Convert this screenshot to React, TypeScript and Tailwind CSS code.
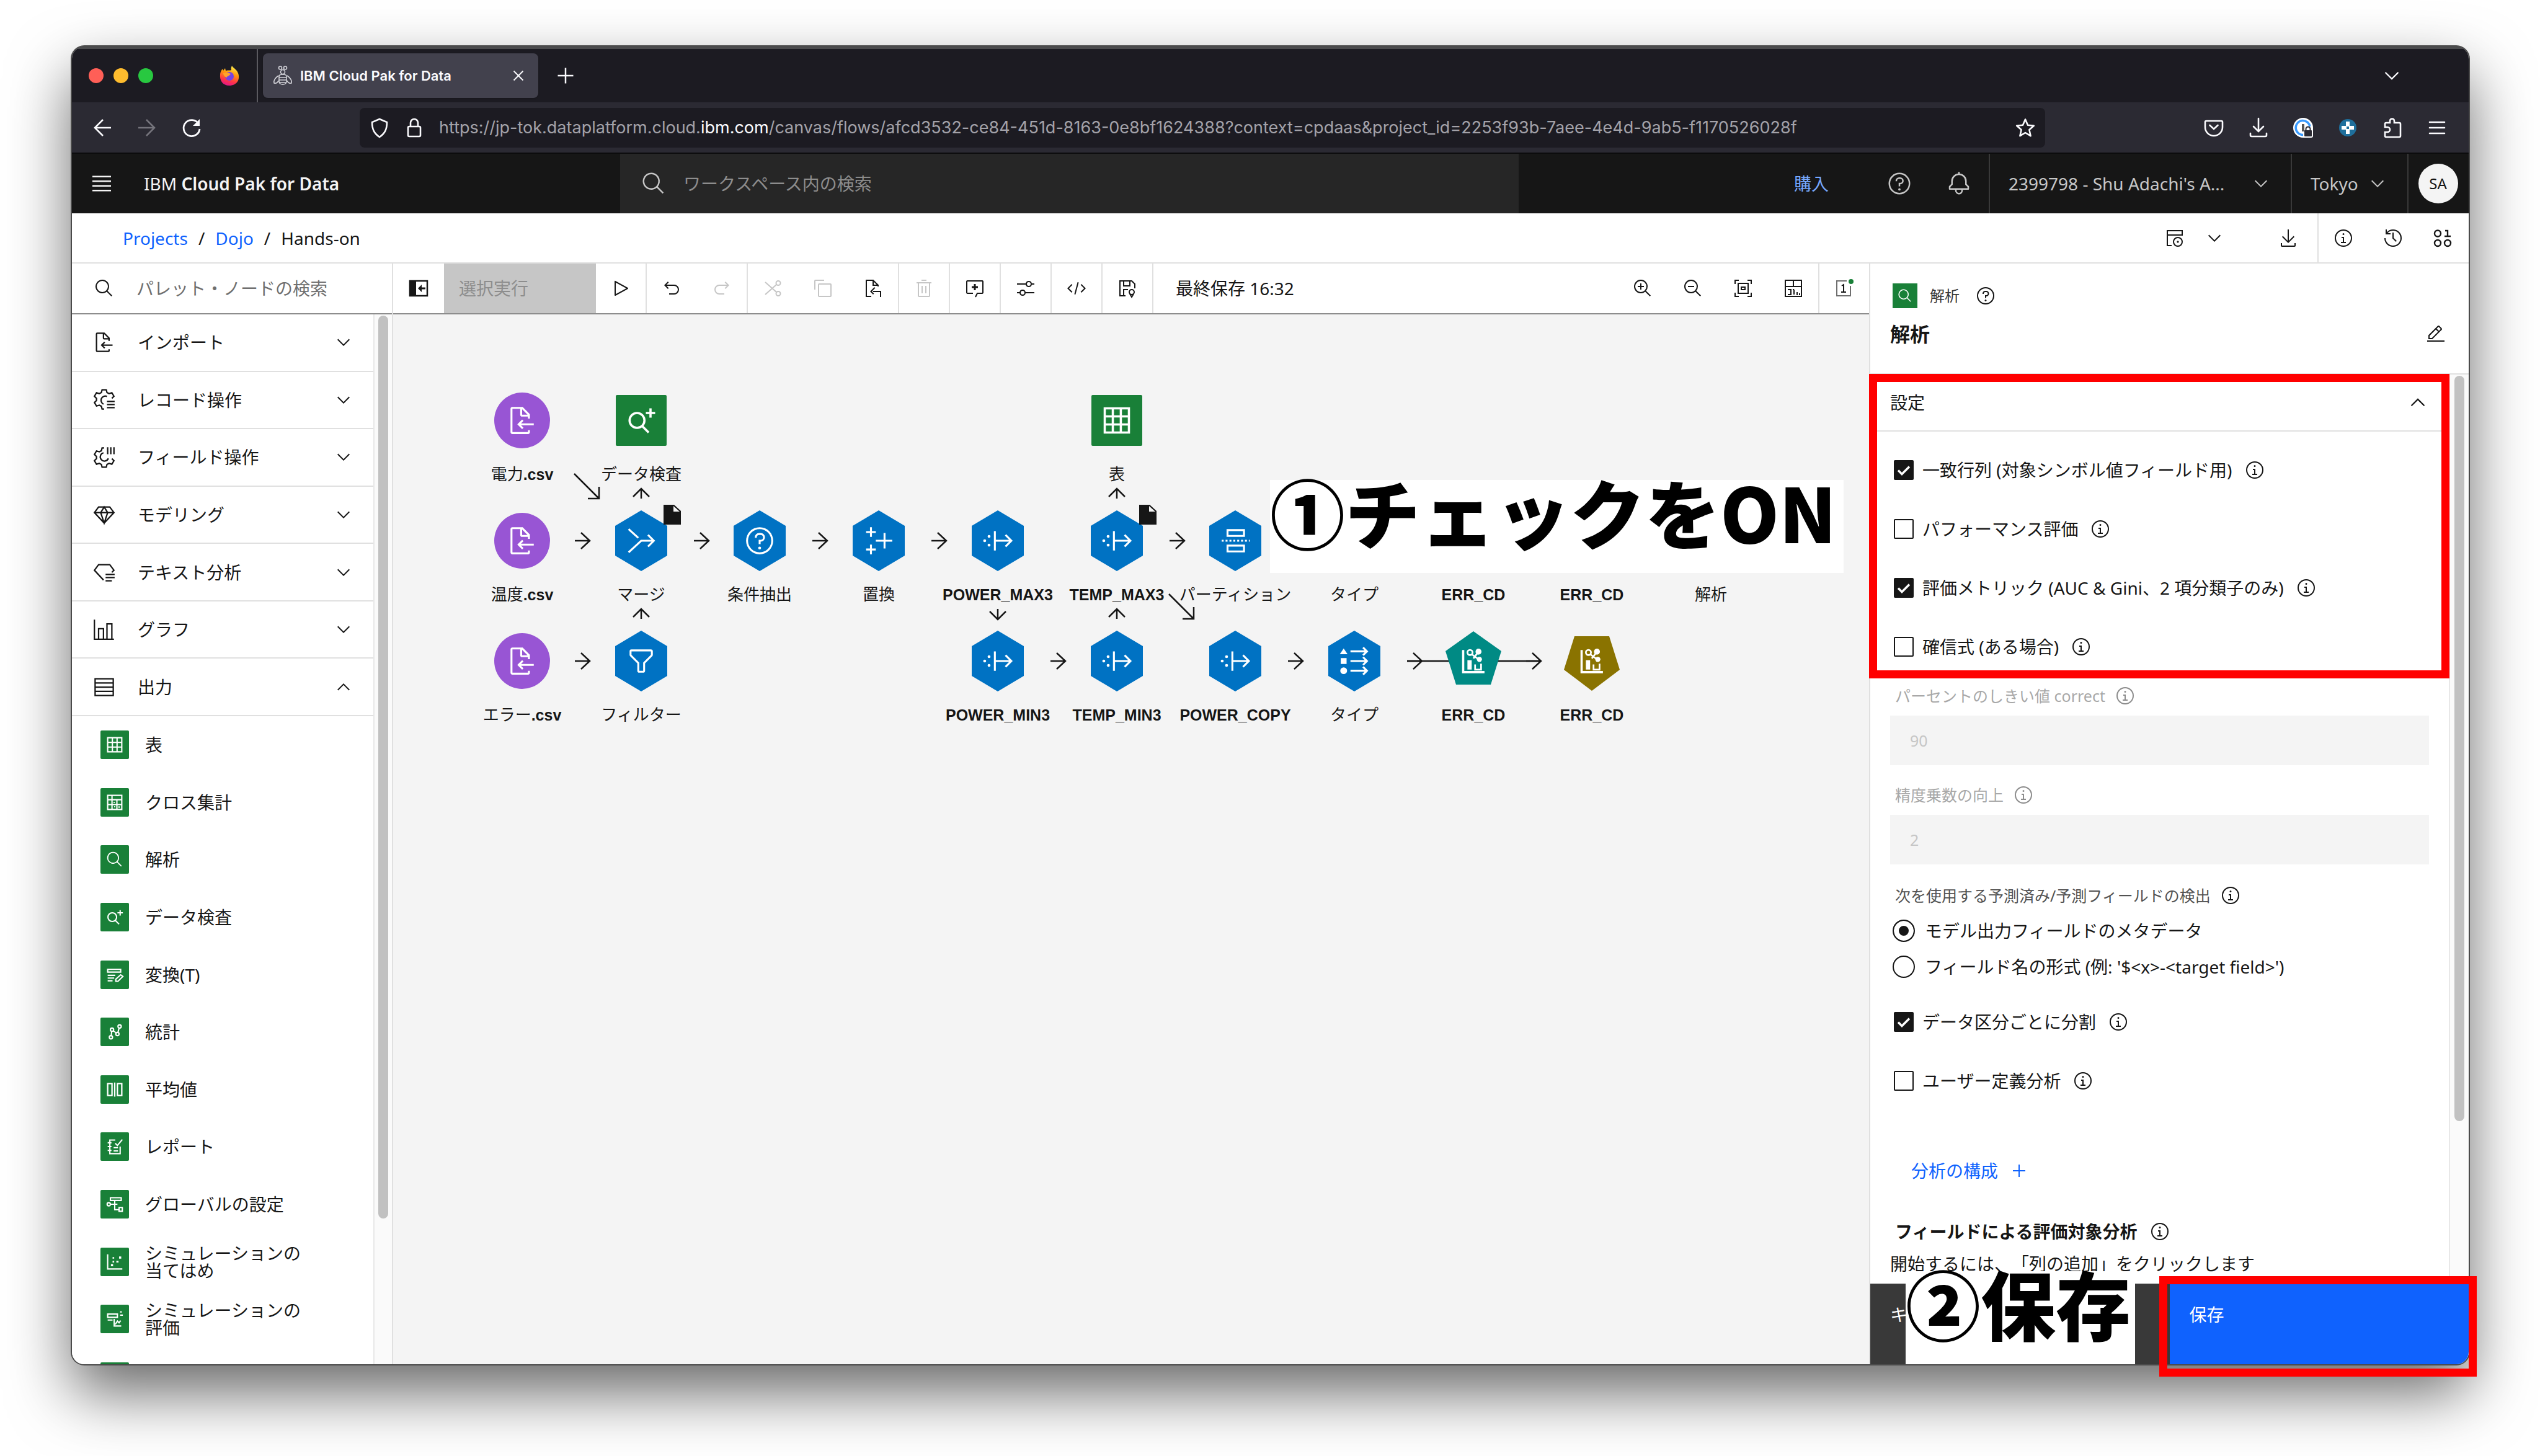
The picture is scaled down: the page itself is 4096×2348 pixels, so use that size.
import React from "react";

type GlyphName = keyof typeof glyphs;

const line = { fill: "none", stroke: "currentColor", strokeWidth: 2 } as const;

const glyphs = {
  search: (
    <path d="m29 27.586-7.552-7.552a11.018 11.018 0 1 0-1.414 1.414L27.586 29ZM4 13a9 9 0 1 1 9 9A9.01 9.01 0 0 1 4 13Z" />
  ),
  searchPlus: (
    <g {...line} strokeWidth={2.4}>
      <circle cx="11.5" cy="16" r="8" />
      <path d="M17 22l7 7M26 3v10M21 8h10" />
    </g>
  ),
  chevronDown: <path d="M16 22 6 12l1.4-1.4 8.6 8.6 8.6-8.6L26 12z" />,
  chevronUp: <path d="m16 10 10 10-1.4 1.4-8.6-8.6-8.6 8.6L6 20z" />,
  help: (
    <>
      <path d="M16 2a14 14 0 1 0 14 14A14 14 0 0 0 16 2Zm0 26a12 12 0 1 1 12-12 12 12 0 0 1-12 12Z" />
      <circle cx="16" cy="23.5" r="1.5" />
      <path d="M17 8h-1.5a4.49 4.49 0 0 0-4.5 4.5v.5h2v-.5a2.5 2.5 0 0 1 2.5-2.5H17a2.5 2.5 0 0 1 0 5h-2v4.5h2V17a4.5 4.5 0 0 0 0-9Z" />
    </>
  ),
  info: (
    <>
      <path d="M17 22v-8h-4v2h2v6h-3v2h8v-2zM16 8a1.5 1.5 0 1 0 1.5 1.5A1.5 1.5 0 0 0 16 8Z" />
      <path d="M16 30a14 14 0 1 1 14-14 14 14 0 0 1-14 14Zm0-26a12 12 0 1 0 12 12A12 12 0 0 0 16 4Z" />
    </>
  ),
  bell: (
    <path d="M28.707 19.293 26 16.586V13a10.014 10.014 0 0 0-9-9.95V1h-2v2.05A10.014 10.014 0 0 0 6 13v3.586l-2.707 2.707A1 1 0 0 0 3 20v3a1 1 0 0 0 1 1h7v.777a5.152 5.152 0 0 0 4.5 5.199A5.006 5.006 0 0 0 21 25v-1h7a1 1 0 0 0 1-1v-3a1 1 0 0 0-.293-.707ZM19 25a3 3 0 0 1-6 0v-1h6Zm8-3H5v-1.586l2.707-2.707A1 1 0 0 0 8 17v-4a8 8 0 0 1 16 0v4a1 1 0 0 0 .293.707L27 20.414Z" />
  ),
  download: (
    <path d="M26 24v4H6v-4H4v4a2 2 0 0 0 2 2h20a2 2 0 0 0 2-2v-4zM26 14l-1.41-1.41L17 20.17V2h-2v18.17l-7.59-7.58L6 14l10 10 10-10z" />
  ),
  menu4: <path d="M4 6h24v2H4zM4 12h24v2H4zM4 18h24v2H4zM4 24h24v2H4z" />,
  play: (
    <path d="M7 28a1 1 0 0 1-1-1V5a1 1 0 0 1 1.482-.876l20 11a1 1 0 0 1 0 1.752l-20 11A1 1 0 0 1 7 28ZM8 6.69v18.619L24.925 16Z" />
  ),
  undo: (
    <path d="M20 10H7.815l3.587-3.586L10 5l-6 6 6 6 1.402-1.415L7.818 12H20a6 6 0 0 1 0 12h-8v2h8a8 8 0 0 0 0-16Z" />
  ),
  redo: (
    <path d="M12 10h12.185l-3.587-3.586L22 5l6 6-6 6-1.402-1.415L24.182 12H12a6 6 0 0 0 0 12h8v2h-8a8 8 0 0 1 0-16Z" />
  ),
  cut: (
    <g {...line}>
      <circle cx="25" cy="7.5" r="3.5" />
      <circle cx="25" cy="24.5" r="3.5" />
      <path d="M4 6l18 16M4 26 22 10" />
    </g>
  ),
  copy: (
    <>
      <path d="M28 10v18H10V10h18m0-2H10a2 2 0 0 0-2 2v18a2 2 0 0 0 2 2h18a2 2 0 0 0 2-2V10a2 2 0 0 0-2-2Z" />
      <path d="M4 18H2V4a2 2 0 0 1 2-2h14v2H4Z" />
    </>
  ),
  paste: (
    <>
      <g {...line}>
        <path d="M13 29H5V3h11l8 8v2M16 3v8h8" />
        <path d="M28 30v-9H16" />
      </g>
      <path d="M19.4 15.4 18 14l-7 7 5 5 1.4-1.4L14 21z" />
    </>
  ),
  trash: (
    <path d="M12 12h2v12h-2zM18 12h2v12h-2zM4 6v2h2v20a2 2 0 0 0 2 2h16a2 2 0 0 0 2-2V8h2V6zm4 22V8h16v20zM12 2h8v2h-8z" />
  ),
  comment: (
    <g {...line}>
      <path d="M13 24H4a1.500 1.500 0 0 1-1-1V5a1.500 1.500 0 0 1 1-1h24a1.500 1.500 0 0 1 1 1v18a1.500 1.500 0 0 1-1 1h-8l-3 6" />
      <path d="M16 9v10M11 14h10" strokeWidth={3} />
    </g>
  ),
  adjust: (
    <path d="M30 8h-4.100a5 5 0 0 0-9.800 0H2v2h14.100a5 5 0 0 0 9.800 0H30zm-9 4a3 3 0 1 1 3-3 3 3 0 0 1-3 3zM2 24h4.100a5 5 0 0 0 9.800 0H30v-2H15.900a5 5 0 0 0-9.800 0H2zm9-4a3 3 0 1 1-3 3 3 3 0 0 1 3-3z" />
  ),
  code: (
    <path d="m31 16-7 7-1.410-1.410L28.170 16l-5.580-5.590L24 9l7 7zM1 16l7-7 1.410 1.410L3.830 16l5.580 5.590L8 23l-7-7zM12.420 25.484 17.640 6l1.932.518L14.350 26z" />
  ),
  save: (
    <g {...line}>
      <path d="M13 28H4V4h19l5 5v7M10 4v8h10V4M10 28V18h7" />
      <circle cx="23" cy="22" r="4" />
      <path d="M20 25l3 5 3-5" />
    </g>
  ),
  zoomIn: (
    <>
      <path d="M18 12h-4V8h-2v4H8v2h4v4h2v-4h4Z" />
      <path d="M21.448 20A10.856 10.856 0 0 0 24 13a11 11 0 1 0-11 11 10.856 10.856 0 0 0 7-2.552L27.586 29 29 27.586ZM13 22a9 9 0 1 1 9-9 9.010 9.010 0 0 1-9 9Z" />
    </>
  ),
  zoomOut: (
    <>
      <path d="M8 12h10v2H8z" />
      <path d="M21.448 20A10.856 10.856 0 0 0 24 13a11 11 0 1 0-11 11 10.856 10.856 0 0 0 7-2.552L27.586 29 29 27.586ZM13 22a9 9 0 1 1 9-9 9.010 9.010 0 0 1-9 9Z" />
    </>
  ),
  fit: (
    <g {...line}>
      <path d="M3 9V3h6M23 3h6v6M29 23v6h-6M9 29H3v-6" />
      <path d="M8 8h16v16H8zM13 14h6v4h-6z" />
    </g>
  ),
  canvasInfo: (
    <g {...line}>
      <path d="M3 3h26v26H3zM3 13h26M16 3v10" />
      <path d="M7 18h5v8H7M17 18h-2M17 18v8M22 22v5M26 24v3" />
    </g>
  ),
  notification: (
    <>
      <g {...line}>
        <path d="M20 4H4v24h22V12" stroke="#6f6f6f" />
        <path d="M12 12l3-2v12M11 22h8" />
      </g>
      <circle cx="27" cy="5" r="4" fill="#198038" />
    </>
  ),
  calendarView: (
    <g {...line}>
      <path d="M11 28H4V4h24v7H4" />
      <circle cx="21" cy="22" r="7" />
      <path d="M21 20.500v3M19.500 22h3" />
    </g>
  ),
  history: (
    <path d="M20.590 22 15 16.410V7h2v8.580l5 5.010L20.590 22zM16 2A13.940 13.940 0 0 0 6 6.230V2H4v8h8V8H7.080A12 12 0 1 1 4 16H2A14 14 0 1 0 16 2Z" />
  ),
  dataClass: (
    <g {...line} strokeWidth={2.400}>
      <circle cx="8" cy="8.500" r="5" />
      <circle cx="8" cy="24" r="5" />
      <circle cx="24" cy="24" r="5" />
      <path d="M20 4h4v9M19 13h10" />
    </g>
  ),
  edit: (
    <path d="M2 26h28v2H2zM25.400 9c.8-.8.8-2 0-2.800l-3.600-3.600c-.8-.8-2-.8-2.800 0l-15 15V24h6.400l15-15zm-5-5L24 7.600l-3 3L17.400 7l3-3zM6 22v-3.600l10-10 3.600 3.600-10 10H6z" />
  ),
  fileImport: (
    <path d="M28 19H14.830l2.580-2.590L16 15l-5 5 5 5 1.410-1.410L14.830 21H28v-2zM24 14v-4a1 1 0 0 0-.290-.710l-7-7A1 1 0 0 0 16 2H6a2 2 0 0 0-2 2v24a2 2 0 0 0 2 2h16a2 2 0 0 0 2-2v-2h-2v2H6V4h8v6a2 2 0 0 0 2 2h6v2Zm-8-4V4.410L21.590 10Z" />
  ),
  recordOps: (
    <g {...line}>
      <path d="M16 29h-3l-1-4-3-1.500-4 1.200-3-5 3-3v-3l-3-3 3-5 4 1.200 3-1.500 1-4h6l1 4 3 1.500 4-1.200 3 5-3 3" />
      <path d="M20 11a6 6 0 1 0-5 11" />
      <path d="M20 18h11M20 22.500h11M20 27h11" />
    </g>
  ),
  fieldOps: (
    <g {...line}>
      <path d="M16 3h-3l-1 4-3 1.500-4-1.200-3 5 3 3v3l-3 3 3 5 4-1.200 3 1.500 1 4h6l1-4 3-1.500 4 1.200 3-5-3-3" />
      <path d="M15 10a6 6 0 1 0 7 8" />
      <path d="M21 2v10M25.500 2v10M30 2v10" />
    </g>
  ),
  model: (
    <g {...line}>
      <path d="M8 5h16l6 8-14 15L2 13zM2 13h28M16 5l-5 8 5 15 5-15z" />
    </g>
  ),
  textAnalytics: (
    <g {...line}>
      <path d="M15 27 2 13l6-8h16l6 8-3 3" />
      <path d="M18 19h13M18 23.500h13M18 28h9" />
    </g>
  ),
  graph: (
    <g {...line}>
      <path d="M2 2v28h28M8 29V15h7v14M20 29V8h7v21" />
    </g>
  ),
  output: (
    <g {...line}>
      <path d="M3 4h26v24H3zM3 10h26M3 16h26M3 22h26" />
    </g>
  ),
  table: (
    <g {...line} strokeWidth={2.400}>
      <path d="M3 3h26v26H3zM3 11.700h26M3 20.300h26M11.700 3v26M20.300 3v26" />
    </g>
  ),
  crosstab: (
    <g {...line} strokeWidth={2.400}>
      <path d="M3 3h26v26H3zM3 11h26M11 3v26M3 20h26M20 11v18M15 15v2M24 23v3M15 24h2" />
    </g>
  ),
  transform: (
    <g {...line} strokeWidth={2.400}>
      <path d="M3 6h24v5H3zM3 17h14M3 22h12M3 27h9" />
      <path d="M18 28v-4l9-8 4 3-9 9z" />
    </g>
  ),
  statistics: (
    <g {...line} strokeWidth={2.400}>
      <circle cx="9" cy="26" r="3" />
      <circle cx="11" cy="12" r="3" />
      <circle cx="21" cy="20" r="3" />
      <circle cx="25" cy="6" r="3" />
      <path d="M9.500 23l1-8M13 14l6 4M22 17l2-8" />
    </g>
  ),
  means: (
    <g {...line} strokeWidth={2.600}>
      <path d="M3 5h8v22H3zM21 5h8v22h-8zM16 3v26" />
    </g>
  ),
  report: (
    <g {...line} strokeWidth={2.400}>
      <path d="M26 16v13H7V4h10M3 9h7M3 16h7M3 23h7M14 18h8M14 24h8M17 10l4 4 9-11" />
    </g>
  ),
  globals: (
    <g {...line} strokeWidth={2.400}>
      <path d="M8 4h20v5H8zM9 16h12M16 9v17h8M24 22h6v7h-6z" />
      <circle cx="5" cy="16" r="3" />
    </g>
  ),
  scatter: (
    <>
      <path d="M3 2v27h27" {...line} strokeWidth={2.400} />
      <path d="M9 20h4v4H9zM12 7h3v3h-3zM12 14h3v3h-3zM19 14h4v3h-4zM24 6h4v4h-4z" />
    </>
  ),
  simEval: (
    <g {...line} strokeWidth={2.400}>
      <path d="M3 7h18v6H3zM3 18h9M15 16v13h13M17 26l4-6 3 3 3-4M26 3h3M26 9h5" />
    </g>
  ),
  filter: (
    <path d="M18 28h-4a2 2 0 0 1-2-2v-7.590L4.590 11A2 2 0 0 1 4 9.590V6a2 2 0 0 1 2-2h20a2 2 0 0 1 2 2v3.590a2 2 0 0 1-.590 1.410L20 18.410V26a2 2 0 0 1-2 2ZM6 6v3.590l8 8V26h4v-8.410l8-8V6Z" />
  ),
  merge: <path d="M3 4l10 9M3 28l13-12h13M23 10l6 6-6 6" {...line} />,
  fill: <path d="M8 2v10M3 7h10M8 20v10M3 25h10M22 8v16M13 16h17" {...line} />,
  derive: (
    <>
      <path d="M13 6v20M13 16h17M24 10l6 6-6 6" {...line} />
      <circle cx="2.500" cy="16" r="1.500" />
      <circle cx="7" cy="11.500" r="1.500" />
      <circle cx="7" cy="20.500" r="1.500" />
    </>
  ),
  partition: (
    <g {...line}>
      <path d="M8 5h17v6H8zM8 21h17v6H8z" />
      <path d="M2 16h29" strokeDasharray="2 2" />
    </g>
  ),
  typeNode: (
    <>
      <path d="M5 3l4 6H1zM2 13h6v6H2z" />
      <circle cx="5" cy="26" r="3.500" />
      <path d="M12 6h16M25 2l4 4-4 4M12 16h16M25 12l4 4-4 4M12 26h16M25 22l4 4-4 4" {...line} />
    </>
  ),
  modelNugget: (
    <>
      <path d="M4 3v26h25" {...line} strokeWidth={2.600} />
      <path d="M9 15h5v11H9z" />
      <path d="M18 20v6h7v-7" {...line} />
      <circle cx="12" cy="6" r="3" {...line} />
      <circle cx="22" cy="5" r="3.500" />
      <circle cx="23" cy="14" r="3" />
      <path d="M14 8l8 6M22 5l-6 8" {...line} />
    </>
  ),
  add: <path d="M17 15V6h-2v9H6v2h9v9h2v-9h9v-2z" />,
  back: <path d="M17 3 4 16l13 13M4 16h26" {...line} strokeWidth={2.600} />,
  forward: <path d="M15 3l13 13-13 13M28 16H2" {...line} strokeWidth={2.600} />,
  reload: (
    <>
      <path d="M27 9.500A13 13 0 1 0 29 18" {...line} strokeWidth={2.800} />
      <path d="M29 2v11H18z" />
    </>
  ),
  shield: <path d="M16 2 4 7c0 11 3 18 12 24 9-6 12-13 12-24z" {...line} strokeWidth={2.600} />,
  lock: (
    <g {...line} strokeWidth={2.600}>
      <rect x="6" y="14" width="20" height="16" rx="2" />
      <path d="M10 14V8a6 6 0 0 1 12 0v6" />
    </g>
  ),
  star: (
    <path
      d="M16 2.500l4 9.200 9.800 1-7.400 6.600 2.200 9.900L16 24l-8.600 5.200 2.200-9.900-7.400-6.600 9.800-1z"
      {...line}
      strokeWidth={2.600}
      strokeLinejoin="round"
    />
  ),
  pocket: (
    <g {...line} strokeWidth={2.600} strokeLinecap="round">
      <path d="M4 5h24a2 2 0 0 1 2 2v8a14 14 0 0 1-28 0V7a2 2 0 0 1 2-2z" />
      <path d="M9.500 12l6.500 6 6.500-6" />
    </g>
  ),
  tray: (
    <g {...line} strokeWidth={2.600} strokeLinecap="round">
      <path d="M16 1v20M8 14l8 8 8-8M3 25v3a2 2 0 0 0 2 2h22a2 2 0 0 0 2-2v-3" />
    </g>
  ),
  keyVault: (
    <>
      <path d="M16 0a16 16 0 0 0 0 32h13a3 3 0 0 0 3-3V16A16 16 0 0 0 16 0z" fill="#fff" />
      <path d="M27 14a11.500 11.500 0 1 0-11 13.500" fill="none" stroke="#3a9bff" strokeWidth="3.500" />
      <path d="M14 10h4v12h-4z" fill="#555" />
      <rect x="18" y="20" width="12" height="10" rx="1" fill="#2b2a33" />
      <path d="M20.500 20v-2a3.500 3.500 0 0 1 7 0v2" fill="none" stroke="#2b2a33" strokeWidth="2" />
    </>
  ),
  extensionBlue: (
    <>
      <circle cx="16" cy="16" r="14" fill="#1f6f9c" />
      <path d="M13 6h6v7h7v6h-7v7h-6v-7H6v-6h7z" fill="#fff" />
      <path d="M14 14h4v4h-4z" fill="#1f6f9c" />
    </>
  ),
  puzzle: (
    <path
      d="M12 8V5a3.500 3.500 0 0 1 7 0v3h8a2 2 0 0 1 2 2v19a2 2 0 0 1-2 2H6a2 2 0 0 1-2-2v-6h4a4 4 0 0 0 0-8H4v-5a2 2 0 0 1 2-2z"
      {...line}
      strokeWidth={2.600}
    />
  ),
  menu3: <path d="M4 7h24M4 16h24M4 25h24" {...line} strokeWidth={2.600} strokeLinecap="round" />,
  close: <path d="M4 4l24 24M28 4 4 28" {...line} strokeWidth={3} />,
  firefox: (
    <>
      <defs>
        <linearGradient id="flame" x1="0.7" y1="0" x2="0.4" y2="1">
          <stop offset="0" stopColor="#fff44f" />
          <stop offset="0.400" stopColor="#ff980e" />
          <stop offset="0.750" stopColor="#ff3647" />
          <stop offset="1" stopColor="#e31587" />
        </linearGradient>
      </defs>
      <path
        d="M20 0c1 3 7 5 10 12 4 11-3 20-14 20S0 24 1 14c0-3 2-7 4-9l1 3 3-4 1 4c4-1 7 0 9-1-1-2 0-5 1-7z"
        fill="url(#flame)"
      />
      <circle cx="16" cy="17" r="7" fill="#7542e5" />
      <path d="M6 12c4-2 8-1 12 1-2 4-6 3-6 6-4-1-6-4-6-7z" fill="#ffa32b" />
    </>
  ),
  bee: (
    <g {...line} strokeWidth={1.600}>
      <circle cx="12" cy="3.500" r="2.500" />
      <circle cx="20" cy="3.500" r="2.500" />
      <circle cx="16" cy="10" r="3.500" />
      <path d="M10 17c0-4 12-4 12 0v8c0 7-12 7-12 0zM10 19h12M10 23h12M10 27h12M9 16c-6 4-8 8-7 12 3 1 6-1 7-4M23 16c6 4 8 8 7 12-3 1-6-1-7-4" />
    </g>
  ),
  page: <path d="M2 0h17l11 10v22H2zM18 2v9h10z" fillRule="evenodd" />,
};

function Icon({ name, className = "size-8" }: { name: GlyphName; className?: string }) {
  return (
    <svg viewBox="0 0 32 32" fill="currentColor" aria-hidden="true" className={"shrink-0 overflow-visible " + className}>
      {glyphs[name]}
    </svg>
  );
}

/* ---------- browser chrome ---------- */

function TabStrip() {
  return (
    <div className="flex h-[90px] items-center border-t-4 border-[#4b4b4d] bg-[#1c1b22] pl-[27px] text-[#fbfbfe]">
      <div className="flex gap-4">
        <button aria-label="Close window" className="size-6 rounded-full bg-[#ff5f57]" />
        <button aria-label="Minimise window" className="size-6 rounded-full bg-[#febc2e]" />
        <button aria-label="Zoom window" className="size-6 rounded-full bg-[#28c840]" />
      </div>
      <Icon name="firefox" className="ml-[107px] size-8" />
      <div className="ml-7 h-full border-r-2 border-[#5b5a60]" />
      <div className="ml-2 flex h-[72px] w-[444px] items-center rounded-lg bg-[#42414d] pr-[22px] pl-4 shadow">
        <Icon name="bee" className="size-8 text-[#d0d0d6]" />
        <span className="ml-3 font-[Inter] text-[22px] font-semibold">IBM Cloud Pak for Data</span>
        <button aria-label="Close tab" className="ml-auto">
          <Icon name="close" className="size-5" />
        </button>
      </div>
      <button aria-label="New tab" className="ml-6">
        <Icon name="add" className="size-10" />
      </button>
      <button aria-label="List all tabs" className="mr-[106px] ml-auto">
        <Icon name="chevronDown" className="size-9" />
      </button>
    </div>
  );
}

function NavBar() {
  const tools: [GlyphName, string][] = [
    ["pocket", "Save to Pocket"],
    ["tray", "Downloads"],
    ["keyVault", "Password manager"],
    ["extensionBlue", "Add-on"],
    ["puzzle", "Extensions"],
    ["menu3", "Application menu"],
  ];
  return (
    <div className="flex h-[83px] items-center border-b-2 border-[#0c0c0d] bg-[#2b2a33] pr-[35px] pl-[33px] text-[#fbfbfe]">
      <div className="flex gap-10">
        <button aria-label="Back"><Icon name="back" /></button>
        <button aria-label="Forward" className="text-[#75747c]"><Icon name="forward" /></button>
        <button aria-label="Reload"><Icon name="reload" /></button>
      </div>
      <div className="mr-[256px] ml-[255px] flex h-16 flex-1 items-center rounded-lg bg-[#1c1b22] px-4">
        <Icon name="shield" />
        <Icon name="lock" className="ml-6 size-8" />
        <div role="textbox" aria-label="Address" tabIndex={0} className="ml-6 flex-1 font-[Inter] text-[27px] whitespace-nowrap text-[#a3a2a9]">
          https://jp-tok.dataplatform.cloud.<span className="text-[#fbfbfe]">ibm.com</span>
          /canvas/flows/afcd3532-ce84-451d-8163-0e8bf1624388?context=cpdaas&amp;project_id=2253f93b-7aee-4e4d-9ab5-f1170526028f
        </div>
        <button aria-label="Bookmark this page"><Icon name="star" /></button>
      </div>
      <div className="flex gap-10">
        {tools.map(([name, label]) => (
          <button key={name} aria-label={label}><Icon name={name} /></button>
        ))}
      </div>
    </div>
  );
}

/* ---------- application header ---------- */

function AppHeader() {
  return (
    <header className="flex h-24 items-center bg-[#161616] pr-[2px] text-[#c6c6c6]">
      <div className="flex w-[884px] items-center text-[#f4f4f4]">
        <button aria-label="Menu" className="grid size-24 place-items-center">
          <Icon name="menu4" className="size-10" />
        </button>
        <span className="ml-5">IBM <b className="font-semibold">Cloud Pak for Data</b></span>
      </div>
      <label className="flex h-full w-[37.5%] items-center gap-7 bg-[#262626] pl-[34px]">
        <Icon name="search" className="size-10" />
        <input aria-label="ワークスペース内の検索" placeholder="ワークスペース内の検索" className="min-w-0 flex-1 bg-transparent outline-none placeholder:text-[#8d8d8d]" />
      </label>
      <a href="#purchase" className="mr-[66px] ml-auto text-[#78a9ff]">購入</a>
      <button aria-label="Help" className="grid size-24 place-items-center"><Icon name="help" className="size-10" /></button>
      <button aria-label="Notifications" className="grid size-24 place-items-center"><Icon name="bell" className="size-10" /></button>
      <button className="flex h-full w-[487px] items-center justify-between border-l-2 border-[#393939] pr-8 pl-[30px]">
        2399798 - Shu Adachi's A... <Icon name="chevronDown" />
      </button>
      <button className="flex h-full w-[188px] items-center justify-between border-l-2 border-[#393939] pr-8 pl-[30px]">
        Tokyo <Icon name="chevronDown" />
      </button>
      <div className="grid h-full w-[97px] place-items-center border-l-2 border-[#393939]">
        <button className="size-16 rounded-full bg-[#f4f4f4] text-[24px] text-[#161616]">SA</button>
      </div>
    </header>
  );
}

function Breadcrumbs() {
  return (
    <div className="flex h-[81px] items-center border-b-2 border-[#e0e0e0] bg-white pl-[82px]">
      <nav className="flex gap-[17px]">
        <a href="#projects" className="text-[#0f62fe]">Projects</a>
        <span>/</span>
        <a href="#dojo" className="text-[#0f62fe]">Dojo</a>
        <span>/</span>
        <span>Hands-on</span>
      </nav>
      <button aria-label="Schedule" className="ml-auto flex gap-8">
        <Icon name="calendarView" />
        <Icon name="chevronDown" />
      </button>
      <button aria-label="Download" className="grid h-full w-[150px] place-items-center pl-14"><Icon name="download" /></button>
      <div className="flex h-full border-l-2 border-[#e0e0e0] pr-[2px]">
        <button aria-label="Information" className="grid w-20 place-items-center"><Icon name="info" /></button>
        <button aria-label="History" className="grid w-20 place-items-center"><Icon name="history" /></button>
        <button aria-label="Data" className="grid w-20 place-items-center"><Icon name="dataClass" /></button>
      </div>
    </div>
  );
}

/* ---------- palette ---------- */

const categories: [GlyphName, string][] = [
  ["fileImport", "インポート"],
  ["recordOps", "レコード操作"],
  ["fieldOps", "フィールド操作"],
  ["model", "モデリング"],
  ["textAnalytics", "テキスト分析"],
  ["graph", "グラフ"],
  ["output", "出力"],
];

const outputs: [GlyphName, string[]][] = [
  ["table", ["表"]],
  ["crosstab", ["クロス集計"]],
  ["search", ["解析"]],
  ["searchPlus", ["データ検査"]],
  ["transform", ["変換(T)"]],
  ["statistics", ["統計"]],
  ["means", ["平均値"]],
  ["report", ["レポート"]],
  ["globals", ["グローバルの設定"]],
  ["scatter", ["シミュレーションの", "当てはめ"]],
  ["simEval", ["シミュレーションの", "評価"]],
  ["table", []],
];

function Palette() {
  return (
    <aside className="flex min-h-0 flex-col border-r-2 border-[#e0e0e0] bg-white">
      <label className="flex h-[82px] shrink-0 items-center gap-9 border-b-2 border-[#8d8d8d] pl-9">
        <Icon name="search" />
        <input aria-label="パレット・ノードの検索" placeholder="パレット・ノードの検索" className="min-w-0 flex-1 bg-transparent outline-none placeholder:text-[#6f6f6f]" />
      </label>
      <div className="flex min-h-0 flex-1">
        <div className="flex-1 overflow-hidden">
          <ul className="grid h-[1759px] auto-rows-fr">
            {categories.map(([icon, label]) => (
              <li key={label} className="border-b-2 border-[#e0e0e0]">
                <button aria-expanded={label === "出力"} className="flex h-full w-full items-center gap-9 pr-8 pl-[34px]">
                  <Icon name={icon} className="size-9" />
                  <span>{label}</span>
                  <Icon name={label === "出力" ? "chevronUp" : "chevronDown"} className="ml-auto size-8" />
                </button>
              </li>
            ))}
            {outputs.map(([icon, lines], i) => (
              <li key={i} className="flex items-center gap-[26px] pl-[46px]">
                <span className="grid size-[46px] place-items-center rounded-[2px] bg-[#198038] text-white">
                  <Icon name={icon} className="size-7" />
                </span>
                <span className="leading-7">
                  {lines.map((l) => (
                    <span key={l} className="block">{l}</span>
                  ))}
                </span>
              </li>
            ))}
          </ul>
        </div>
        <div className="flex w-[30px] justify-center border-l-2 border-[#e8e8e8] bg-[#fafafa]">
          <div className="mt-[2px] h-[86%] w-4 rounded-full bg-[#c1c1c1]" />
        </div>
      </div>
    </aside>
  );
}

/* ---------- toolbar ---------- */

function ToolGroup({ items }: { items: [GlyphName, string, boolean?][] }) {
  return (
    <div className="flex h-full gap-px border-r-2 border-[#e0e0e0]">
      {items.map(([name, label, off]) => (
        <button
          key={name}
          aria-label={label}
          disabled={off}
          className="grid w-20 place-items-center text-[#161616] disabled:text-[#c6c6c6]"
        >
          <Icon name={name} />
        </button>
      ))}
    </div>
  );
}

function Toolbar() {
  return (
    <div className="flex h-[82px] shrink-0 items-center border-b-2 border-[#8d8d8d] bg-white">
      <button aria-label="パレットを閉じる" className="grid h-full w-[82px] place-items-center">
        <svg viewBox="0 0 32 32" className="size-8" aria-hidden="true">
          <path d="M2 4h28v24H2z" fill="none" stroke="#161616" strokeWidth="2.500" />
          <path d="M2 4h10v24H2zM15 16l6-6v4.500h6v3h-6V22z" fill="#161616" />
        </svg>
      </button>
      <button disabled className="h-full w-[245px] bg-[#c6c6c6] pl-6 text-left text-[#8d8d8d]">選択実行</button>
      <ToolGroup items={[["play", "実行"]]} />
      <ToolGroup items={[["undo", "元に戻す"], ["redo", "やり直し", true]]} />
      <ToolGroup items={[["cut", "切り取り", true], ["copy", "コピー", true], ["paste", "貼り付け"]]} />
      <ToolGroup items={[["trash", "削除", true]]} />
      <ToolGroup items={[["comment", "コメント"]]} />
      <ToolGroup items={[["adjust", "設定"]]} />
      <ToolGroup items={[["code", "コード"]]} />
      <ToolGroup items={[["save", "保存"]]} />
      <span className="ml-9">最終保存 16:32</span>
      <div className="ml-auto flex h-full">
        <ToolGroup items={[["zoomIn", "拡大"], ["zoomOut", "縮小"], ["fit", "全体表示"], ["canvasInfo", "概要"]]} />
        <button aria-label="通知" className="grid w-20 place-items-center"><Icon name="notification" /></button>
      </div>
    </div>
  );
}

/* ---------- flow canvas ---------- */

type Shape = "circle" | "square" | "hexagon" | "pentagon" | "nugget";
type FlowNode = { col: number; row: number; shape: Shape; icon: GlyphName; jp?: string; en?: string; page?: boolean };

const nodes: FlowNode[] = [
  { col: 0, row: 0, shape: "circle", icon: "fileImport", jp: "電力", en: ".csv" },
  { col: 1, row: 0, shape: "square", icon: "searchPlus", jp: "データ検査" },
  { col: 5, row: 0, shape: "square", icon: "table", jp: "表" },
  { col: 0, row: 1, shape: "circle", icon: "fileImport", jp: "温度", en: ".csv" },
  { col: 1, row: 1, shape: "hexagon", icon: "merge", jp: "マージ", page: true },
  { col: 2, row: 1, shape: "hexagon", icon: "help", jp: "条件抽出" },
  { col: 3, row: 1, shape: "hexagon", icon: "fill", jp: "置換" },
  { col: 4, row: 1, shape: "hexagon", icon: "derive", en: "POWER_MAX3" },
  { col: 5, row: 1, shape: "hexagon", icon: "derive", en: "TEMP_MAX3", page: true },
  { col: 6, row: 1, shape: "hexagon", icon: "partition", jp: "パーティション" },
  { col: 7, row: 1, shape: "hexagon", icon: "typeNode", jp: "タイプ" },
  { col: 8, row: 1, shape: "pentagon", icon: "modelNugget", en: "ERR_CD" },
  { col: 9, row: 1, shape: "nugget", icon: "modelNugget", en: "ERR_CD" },
  { col: 10, row: 1, shape: "square", icon: "search", jp: "解析" },
  { col: 0, row: 2, shape: "circle", icon: "fileImport", jp: "エラー", en: ".csv" },
  { col: 1, row: 2, shape: "hexagon", icon: "filter", jp: "フィルター" },
  { col: 4, row: 2, shape: "hexagon", icon: "derive", en: "POWER_MIN3" },
  { col: 5, row: 2, shape: "hexagon", icon: "derive", en: "TEMP_MIN3" },
  { col: 6, row: 2, shape: "hexagon", icon: "derive", en: "POWER_COPY" },
  { col: 7, row: 2, shape: "hexagon", icon: "typeNode", jp: "タイプ" },
  { col: 8, row: 2, shape: "pentagon", icon: "modelNugget", en: "ERR_CD" },
  { col: 9, row: 2, shape: "nugget", icon: "modelNugget", en: "ERR_CD" },
];

const shapes: Record<Shape, React.ReactElement> = {
  circle: <circle cx="50" cy="50" r="45" fill="#9855d4" />,
  square: <rect x="9" y="9" width="82" height="82" rx="2" fill="#198038" />,
  hexagon: <path d="M50 1l42 25v48L50 99 8 74V26z" fill="#0072c3" />,
  pentagon: <path d="M50 2l45 32-17 54H22L5 34z" fill="#008a84" />,
  nugget: <path d="M22 10h56l17 54-45 34L5 64z" fill="#8a7300" />,
};

const colX = (c: number) => Math.round(208 + 191.7 * c);
const rowY = (r: number) => 171 + 194 * r;

function NodeView({ node }: { node: FlowNode }) {
  return (
    <div
      className="absolute flex w-[192px] flex-col items-center"
      style={{ left: colX(node.col) - 96, top: rowY(node.row) - 50 }}
    >
      <div className="relative grid size-[100px] place-items-center">
        <svg viewBox="0 0 100 100" className="col-start-1 row-start-1 size-[100px]" aria-hidden="true">
          {shapes[node.shape]}
        </svg>
        <Icon
          name={node.icon}
          className={
            node.shape === "square"
              ? "col-start-1 row-start-1 size-12 text-white"
              : node.shape === "pentagon" || node.shape === "nugget"
                ? "col-start-1 row-start-1 size-11 text-white"
                : "col-start-1 row-start-1 size-[50px] text-white"
          }
        />
        {node.page && <Icon name="page" className="absolute -top-2 -right-4 size-8 text-[#161616]" />}
      </div>
      <span className="mt-5 text-[26px] leading-[34px] whitespace-nowrap font-['Liberation_Sans','Noto_Sans_CJK_JP',sans-serif]">
        {node.jp}
        <b className="text-[25px]">{node.en}</b>
      </span>
    </div>
  );
}

const rightArrows: [number, number][] = [
  [0, 1], [1, 1], [2, 1], [3, 1], [5, 1],
  [0, 2], [4, 2], [6, 2], [7, 2], [8, 2],
];

function Canvas() {
  return (
    <div className="relative flex-1 overflow-hidden bg-[#f4f4f4]">
      <svg className="absolute inset-0 h-full w-full" fill="none" stroke="#161616" strokeWidth="2.500" aria-hidden="true">
        {rightArrows.map(([c, r]) => (
          <path key={c + "-" + r} d={`M${colX(c) + 85} ${rowY(r)}h24m-14-13l14 13-14 13`} />
        ))}
        <path d={`M${colX(7) + 85} ${rowY(2)}H${colX(8) + 109}`} />
        <path d="M400 297v-16m-13 13l13-13 13 13M400 491v-16m-13 13l13-13 13 13M1167 297v-16m-13 13l13-13 13 13M1167 491v-16m-13 13l13-13 13 13M975 475v17m-13-13l13 13 13-13" />
        <path d="M292 257l40 40m-18 0h18v-19M1251 451l40 40m-18 0h18v-19" />
      </svg>
      {nodes.map((n) => (
        <NodeView key={n.col + "-" + n.row} node={n} />
      ))}
    </div>
  );
}

/* ---------- properties panel ---------- */

function CheckRow({ id, label, checked }: { id: string; label: string; checked?: boolean }) {
  return (
    <div className="flex h-[95px] items-center pl-[38px]">
      <span className="grid size-8 place-items-center">
        <input
          id={id}
          type="checkbox"
          defaultChecked={checked}
          className="col-start-1 row-start-1 size-8 appearance-none rounded-[2px] border-2 border-[#161616] checked:bg-[#161616]"
        />
        {checked && (
          <svg viewBox="0 0 32 32" className="pointer-events-none col-start-1 row-start-1 size-8" fill="none" stroke="#fff" strokeWidth="3.500" aria-hidden="true">
            <path d="M7 16.500l6 6 12-12" />
          </svg>
        )}
      </span>
      <label htmlFor={id} className="ml-[14px]">{label}</label>
      <Icon name="info" className="ml-5 size-8" />
    </div>
  );
}

function RadioRow({ id, label, checked }: { id: string; label: string; checked?: boolean }) {
  return (
    <div className="flex h-[58px] items-center pl-9">
      <input
        id={id}
        type="radio"
        name="detect"
        defaultChecked={checked}
        className="size-9 appearance-none rounded-full border-2 border-[#161616] checked:bg-[#161616] checked:shadow-[inset_0_0_0_8px_white]"
      />
      <label htmlFor={id} className="ml-4">{label}</label>
    </div>
  );
}

function NumberField({ id, label, value }: { id: string; label: string; value: string }) {
  return (
    <div className="pr-8 pl-8">
      <div className="flex h-12 items-center gap-4 pl-2 text-[25px] text-[#a8a8a8]">
        <label htmlFor={id}>{label}</label>
        <Icon name="info" className="size-8 text-[#8d8d8d]" />
      </div>
      <input
        id={id}
        disabled
        defaultValue={value}
        className="mt-2 block h-20 w-full bg-[#f4f4f4] px-8 text-[25px] text-[#c6c6c6]"
      />
    </div>
  );
}

function PropertiesPanel() {
  return (
    <section className="flex min-h-0 flex-col border-l-2 border-[#e0e0e0] bg-white">
      <div className="flex h-[179px] shrink-0 flex-col border-b-2 border-[#e0e0e0] pt-8 pr-[37px] pl-8">
        <div className="flex items-center pl-1 text-[24px] leading-10 text-[#393939]">
          <span className="grid size-10 place-items-center bg-[#198038] text-white"><Icon name="search" className="size-6" /></span>
          <span className="ml-5">解析</span>
          <button aria-label="ヘルプ" className="ml-[26px] text-[#161616]"><Icon name="help" /></button>
        </div>
        <div className="mt-5 flex items-center justify-between">
          <h2 className="text-[32px] leading-[44px] font-bold">解析</h2>
          <button aria-label="名前の編集"><Icon name="edit" /></button>
        </div>
      </div>
      <div className="flex min-h-0 flex-1">
        <div className="flex-1 overflow-hidden">
          <button aria-expanded="true" className="flex h-[92px] w-full items-center justify-between border-b-2 border-[#e0e0e0] pr-8 pl-8">
            設定 <Icon name="chevronUp" className="size-9" />
          </button>
          <div className="mt-[14px]">
            <CheckRow id="matrix" label="一致行列 (対象シンボル値フィールド用)" checked />
            <CheckRow id="perf" label="パフォーマンス評価" />
            <CheckRow id="metric" label="評価メトリック (AUC &amp; Gini、2 項分類子のみ)" checked />
            <CheckRow id="confidence" label="確信式 (ある場合)" />
          </div>
          <div className="mt-2 flex flex-col gap-6">
            <NumberField id="threshold" label="パーセントのしきい値 correct" value="90" />
            <NumberField id="improve" label="精度乗数の向上" value="2" />
          </div>
          <fieldset className="mt-[26px]">
            <legend className="mb-1 flex h-12 items-center gap-4 pl-10 text-[25px] text-[#525252]">
              次を使用する予測済み/予測フィールドの検出
              <Icon name="info" className="size-8 text-[#161616]" />
            </legend>
            <RadioRow id="meta" label="モデル出力フィールドのメタデータ" checked />
            <RadioRow id="format" label="フィールド名の形式 (例: '$<x>-<target field>')" />
          </fieldset>
          <div className="mt-3">
            <CheckRow id="split" label="データ区分ごとに分割" checked />
            <CheckRow id="custom" label="ユーザー定義分析" />
          </div>
          <button className="mt-[58px] flex h-20 items-center gap-[18px] pl-[66px] text-[#0f62fe]">
            分析の構成 <Icon name="add" className="size-8" />
          </button>
          <h3 className="mt-[34px] flex h-12 items-center gap-5 pl-10 font-bold">
            フィールドによる評価対象分析 <Icon name="info" />
          </h3>
          <p className="mt-2 pl-8 leading-10 [text-spacing-trim:space-all]">開始するには、「列の追加」をクリックします</p>
        </div>
        <div className="flex w-8 justify-center border-l-2 border-[#e8e8e8] bg-[#fafafa]">
          <div className="mt-[2px] h-[82%] w-4 rounded-full bg-[#c1c1c1]" />
        </div>
      </div>
      <div className="grid h-[130px] shrink-0 grid-cols-2 text-white">
        <button className="flex items-start bg-[#393939] pt-[30px] pl-8 leading-10">キャンセル</button>
        <button className="flex items-start bg-[#0f62fe] pt-[30px] pl-8 leading-10">保存</button>
      </div>
    </section>
  );
}

/* ---------- page ---------- */

export default function App() {
  return (
    <div className="flex h-screen overflow-hidden bg-white pt-[75px] pr-[115px] pb-[148px] pl-[116px] font-['Noto_Sans','Noto_Sans_CJK_JP',sans-serif] text-[28px] leading-10 text-[#161616]">
      <div className="relative flex min-w-0 flex-1">
        <div className="flex min-w-0 flex-1 flex-col overflow-hidden rounded-[20px] bg-white shadow-[0_0_0_2px_#4a4a4a,0_45px_100px_rgba(0,0,0,0.6)]">
          <TabStrip />
          <NavBar />
          <AppHeader />
          <Breadcrumbs />
          <main className="grid min-h-0 flex-1 grid-cols-[518px_minmax(0,1fr)_967px] grid-rows-[minmax(0,1fr)]">
            <Palette />
            <div className="flex min-w-0 flex-col">
              <Toolbar />
              <Canvas />
            </div>
            <PropertiesPanel />
          </main>
        </div>
        <div className="absolute top-[528px] right-[31px] h-[491px] w-[936px] border-[13px] border-[#ff0000]" />
        <div className="absolute right-[1008px] top-[699px] h-[150px] w-[925px] bg-white font-['Noto_Sans_CJK_JP',sans-serif] text-[121px] leading-[100px] font-black whitespace-nowrap text-black">
          ①チェックをON
        </div>
        <div className="absolute right-[538px] bottom-0 h-[150px] w-[370px] bg-white font-['Noto_Sans_CJK_JP',sans-serif] text-[121px] leading-[100px] font-black whitespace-nowrap text-black">
          ②保存
        </div>
        <div className="absolute -right-[13px] -bottom-5 h-[162px] w-[512px] border-[13px] border-[#ff0000]" />
      </div>
    </div>
  );
}
